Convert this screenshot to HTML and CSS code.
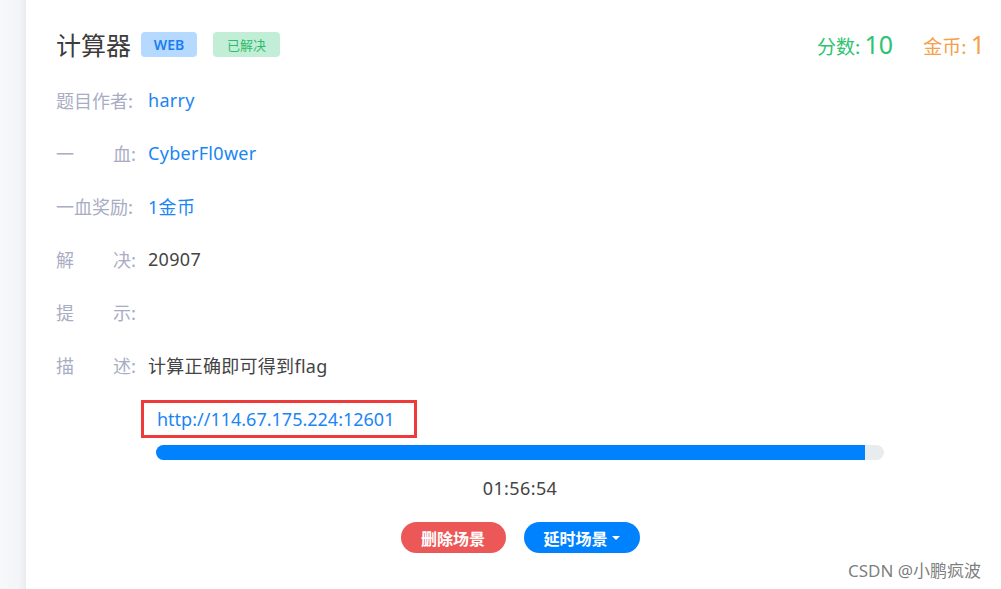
FILE: index.html
```html
<!DOCTYPE html>
<html lang="zh-CN">
<head>
<meta charset="utf-8">
<title>计算器</title>
<link rel="stylesheet" href="styles.css">
</head>
<body>
<div class="page">
  <div class="aside"></div>
  <div class="card">
    <div class="header">
      <div class="title-group">
        <span class="title">计算器</span>
        <span class="badge badge-web">WEB</span>
        <span class="badge badge-solved">已解决</span>
      </div>
      <div class="stats">
        <span class="stat stat-score">分数: <b>10</b></span>
        <span class="stat stat-coin">金币: <b>1</b></span>
      </div>
    </div>
    <div class="row"><span class="label">题目作者:</span><span class="value link">harry</span></div>
    <div class="row"><span class="label label-j"><span>一</span><span>血:</span></span><span class="value link">CyberFl0wer</span></div>
    <div class="row"><span class="label">一血奖励:</span><span class="value link">1金币</span></div>
    <div class="row"><span class="label label-j"><span>解</span><span>决:</span></span><span class="value">20907</span></div>
    <div class="row"><span class="label label-j"><span>提</span><span>示:</span></span><span class="value"></span></div>
    <div class="row"><span class="label label-j"><span>描</span><span>述:</span></span><span class="value">计算正确即可得到flag</span></div>
    <div class="scene">
      <div class="url-box"><span class="url">http://114.67.175.224:12601</span></div>
      <div class="progress"><div class="progress-fill" style="width:97.4%"></div></div>
      <div class="timer">01:56:54</div>
      <div class="actions">
        <button class="btn btn-red">删除场景</button>
        <button class="btn btn-blue">延时场景<span class="caret"></span></button>
      </div>
    </div>
  </div>
</div>
<div class="watermark">CSDN @小鹏疯波</div>
</body>
</html>
```

FILE: styles.css
```css
* { box-sizing: border-box; }
html, body { margin: 0; padding: 0; background: #fff; }
body {
  font-family: "Noto Sans", "Noto Sans CJK SC", sans-serif;
  color: #444;
  width: 1001px;
  height: 589px;
  overflow: hidden;
  position: relative;
}
.page { display: flex; height: 589px; }
.aside {
  width: 26px;
  flex: none;
  background: linear-gradient(to right, #f7f8fa 0%, #f4f5f8 70%, #eaecef 100%);
}
.card {
  flex: 1;
  padding: 32px 16px 0 30px;
  background: #fff;
}
.header {
  display: flex;
  justify-content: space-between;
  align-items: center;
  height: 25px;
  margin-bottom: 16px;
}
.title-group { display: flex; align-items: center; }
.title {
  font-family: "Noto Sans CJK SC", sans-serif;
  font-size: 25px;
  line-height: 25px;
  color: #3c3c3c;
  margin-right: 10px;
}
.badge {
  display: inline-flex;
  align-items: center;
  justify-content: center;
  height: 25px;
  border-radius: 4px;
  font-size: 14px;
  font-family: "Noto Sans", "Noto Sans CJK SC", sans-serif;
}
.badge-web {
  width: 56px;
  background: #b5d9ff;
  color: #1a7df0;
  font-weight: 600;
}
.badge-solved {
  width: 67px;
  margin-left: 16px;
  background: #c2eed8;
  color: #2cbd6a;
  font-size: 13px;
}
.stats { display: flex; align-items: baseline; gap: 30px; }
.stat {
  font-family: "Noto Sans CJK SC", sans-serif;
  font-size: 19px;
  line-height: 25px;
}
.stat b { font-weight: 400; font-size: 25px; font-family: "Noto Sans", sans-serif; }
.stat-score { color: #2ec371; }
.stat-coin { color: #f7a04a; }
.row {
  display: flex;
  align-items: center;
  height: 53px;
  font-size: 18px;
  font-family: "Noto Sans CJK SC", sans-serif;
}
.label {
  width: 92px;
  flex: none;
  color: #a9adc3;
}
.label-j {
  display: flex;
  justify-content: space-between;
  width: 80px;
  margin-right: 12px;
}
.value {
  color: #444;
  font-family: "Noto Sans", "Noto Sans CJK SC", sans-serif;
  letter-spacing: 0.3px;
}
.link { color: #1a85f5; }
.scene {
  margin-top: 9px;
  display: flex;
  flex-direction: column;
  align-items: flex-start;
  width: 828px;
  padding-left: 85px;
}
.url-box {
  width: 276px;
  height: 38px;
  border: 3px solid #ee3a3a;
  padding-left: 13px;
  display: flex;
  align-items: center;
}
.url {
  font-size: 18px;
  color: #1a85f5;
  font-family: "Noto Sans", sans-serif;
}
.progress {
  margin-top: 7px;
  margin-left: 15px;
  width: 728px;
  height: 15px;
  border-radius: 8px;
  background: #e9ecef;
  overflow: hidden;
}
.progress-fill { height: 100%; background: #0082ff; }
.timer {
  margin-left: 15px;
  width: 728px;
  margin-top: 16px;
  text-align: center;
  font-size: 18px;
  line-height: 24px;
  color: #444;
  letter-spacing: 0.4px;
  font-family: "Noto Sans", sans-serif;
}
.actions {
  margin-top: 22px;
  margin-left: 15px;
  width: 728px;
  display: flex;
  justify-content: center;
  gap: 18px;
}
.btn {
  border: none;
  height: 31px;
  border-radius: 16px;
  color: #fff;
  font-size: 16px;
  font-weight: 700;
  font-family: "Noto Sans CJK SC", sans-serif;
  display: inline-flex;
  align-items: center;
  justify-content: center;
  padding: 0;
}
.btn-red { width: 105px; background: #ec5757; }
.btn-blue { width: 116px; background: #0082ff; }
.caret {
  display: inline-block;
  width: 0; height: 0;
  margin-left: 4px;
  border-left: 4px solid transparent;
  border-right: 4px solid transparent;
  border-top: 4px solid #fff;
}
.watermark {
  position: absolute;
  top: 560px;
  left: 848px;
  font-family: "Noto Sans", "Noto Sans CJK SC", sans-serif;
  font-size: 17px;
  line-height: 22px;
  color: rgba(90, 90, 90, 0.8);
}
```
